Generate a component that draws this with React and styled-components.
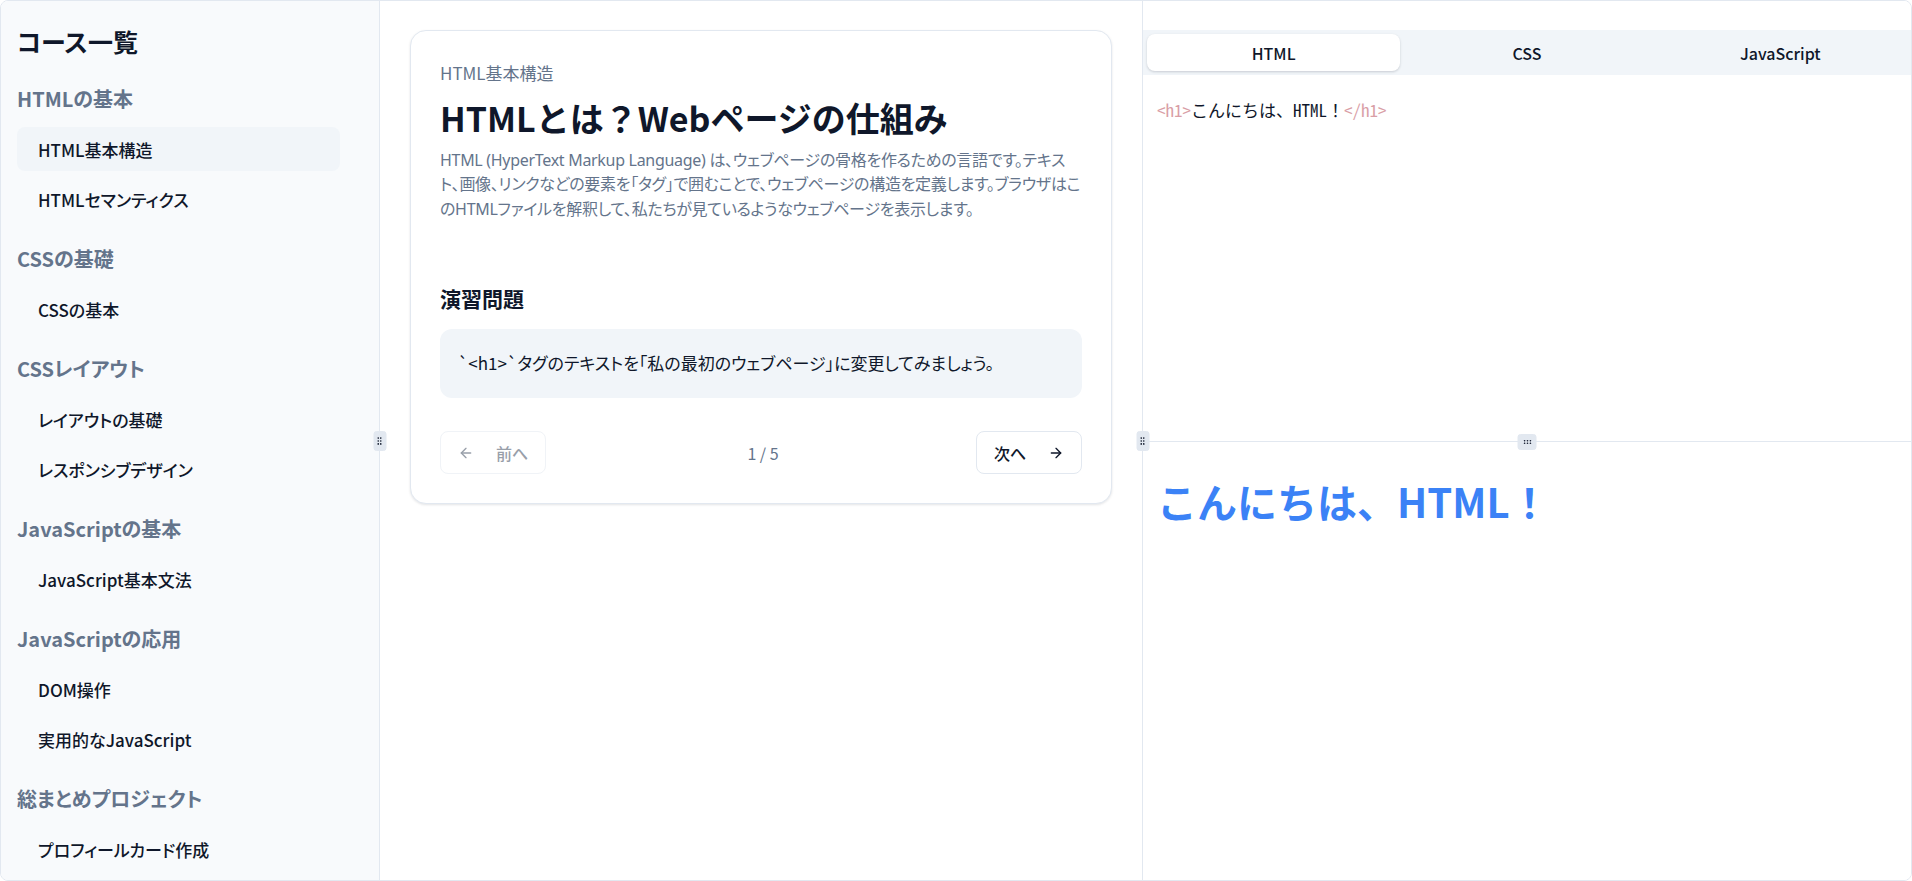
import React from "react";
import styled, { createGlobalStyle } from "styled-components";
import { ArrowLeft, ArrowRight } from "lucide-react";

const GlobalStyle = createGlobalStyle`
  html, body {
    margin: 0;
    padding: 0;
    height: 100%;
    background: #ffffff;
  }
  body {
    font-family: "Noto Sans CJK JP", "Noto Sans", sans-serif;
    color: #0f172a;
  }
  * {
    box-sizing: border-box;
  }
`;

const courses = [
  { title: "HTMLの基本", lessons: ["HTML基本構造", "HTMLセマンティクス"] },
  { title: "CSSの基礎", lessons: ["CSSの基本"] },
  { title: "CSSレイアウト", lessons: ["レイアウトの基礎", "レスポンシブデザイン"] },
  { title: "JavaScriptの基本", lessons: ["JavaScript基本文法"] },
  { title: "JavaScriptの応用", lessons: ["DOM操作", "実用的なJavaScript"] },
  { title: "総まとめプロジェクト", lessons: ["プロフィールカード作成"] },
];

const GripDots = ({ horizontal }) => (
  <svg
    width={horizontal ? 12 : 10}
    height={horizontal ? 10 : 12}
    viewBox="0 0 24 24"
    fill="#0f172a"
  >
    {horizontal ? (
      <>
        <circle cx="5" cy="9" r="2" />
        <circle cx="12" cy="9" r="2" />
        <circle cx="19" cy="9" r="2" />
        <circle cx="5" cy="15" r="2" />
        <circle cx="12" cy="15" r="2" />
        <circle cx="19" cy="15" r="2" />
      </>
    ) : (
      <>
        <circle cx="9" cy="5" r="2" />
        <circle cx="9" cy="12" r="2" />
        <circle cx="9" cy="19" r="2" />
        <circle cx="15" cy="5" r="2" />
        <circle cx="15" cy="12" r="2" />
        <circle cx="15" cy="19" r="2" />
      </>
    )}
  </svg>
);

const App = () => {
  return (
    <>
      <GlobalStyle />
      <Layout>
        <Sidebar>
          <SidebarTitle>コース一覧</SidebarTitle>
          <GroupList>
            {courses.map((course) => (
              <Group key={course.title}>
                <GroupTitle>{course.title}</GroupTitle>
                <LessonList>
                  {course.lessons.map((lesson) => (
                    <Lesson key={lesson} $active={lesson === "HTML基本構造"}>
                      {lesson}
                    </Lesson>
                  ))}
                </LessonList>
              </Group>
            ))}
          </GroupList>
        </Sidebar>

        <VDivider>
          <VGrip>
            <GripDots />
          </VGrip>
        </VDivider>

        <Main>
          <Card>
            <Breadcrumb>HTML基本構造</Breadcrumb>
            <LessonTitle>HTMLとは？Webページの仕組み</LessonTitle>
            <Description>
              HTML (HyperText Markup Language)
              は、ウェブページの骨格を作るための言語です。テキスト、画像、リンクなどの要素を「タグ」で囲むことで、ウェブページの構造を定義します。ブラウザはこのHTMLファイルを解釈して、私たちが見ているようなウェブページを表示します。
            </Description>
            <ExerciseTitle>演習問題</ExerciseTitle>
            <ExerciseBox>`&lt;h1&gt;`タグのテキストを「私の最初のウェブページ」に変更してみましょう。</ExerciseBox>
            <Pager>
              <PagerButton disabled>
                <ArrowLeft size={16} strokeWidth={2} />
                <span>前へ</span>
              </PagerButton>
              <PageCount>1 / 5</PageCount>
              <PagerButton>
                <span>次へ</span>
                <ArrowRight size={16} strokeWidth={2} />
              </PagerButton>
            </Pager>
          </Card>
        </Main>

        <VDivider>
          <VGrip>
            <GripDots />
          </VGrip>
        </VDivider>

        <Workspace>
          <EditorPane>
            <TabBar>
              <Tab $active>HTML</Tab>
              <Tab>CSS</Tab>
              <Tab>JavaScript</Tab>
            </TabBar>
            <Code>
              <TagToken>&lt;h1&gt;</TagToken>
              こんにちは、HTML！
              <TagToken>&lt;/h1&gt;</TagToken>
            </Code>
          </EditorPane>
          <HDivider>
            <HGrip>
              <GripDots horizontal />
            </HGrip>
          </HDivider>
          <PreviewPane>
            <PreviewHeading>こんにちは、HTML！</PreviewHeading>
          </PreviewPane>
        </Workspace>
      </Layout>
    </>
  );
};

export default App;

const Layout = styled.div`
  display: flex;
  height: 100vh;
  border: 1px solid #e2e8f0;
  border-radius: 8px;
  overflow: hidden;
  background: #ffffff;
`;

const Sidebar = styled.aside`
  flex: 0 0 378px;
  background: #f8fafc;
  padding: 24px 39px 24px 16px;
  overflow: hidden;
  font-feature-settings: "palt";
`;

const SidebarTitle = styled.h2`
  margin: 0 0 28px;
  font-size: 25px;
  line-height: 32px;
  font-weight: 700;
  color: #0f172a;
`;

const GroupList = styled.div`
  display: flex;
  flex-direction: column;
  gap: 24px;
`;

const Group = styled.section`
  display: flex;
  flex-direction: column;
  gap: 14px;
`;

const GroupTitle = styled.h3`
  margin: 0;
  font-size: 20px;
  line-height: 28px;
  font-weight: 600;
  color: #64748b;
`;

const LessonList = styled.div`
  display: flex;
  flex-direction: column;
  gap: 6px;
`;

const Lesson = styled.div`
  display: flex;
  align-items: center;
  height: 44px;
  padding: 0 21px;
  border-radius: 8px;
  font-size: 17px;
  font-weight: 500;
  color: #0f172a;
  background: ${(p) => (p.$active ? "#f1f5f9" : "transparent")};
  cursor: pointer;
`;

const VDivider = styled.div`
  position: relative;
  flex: 0 0 1px;
  background: #e2e8f0;
`;

const VGrip = styled.div`
  position: absolute;
  top: 50%;
  left: 50%;
  transform: translate(-50%, -50%);
  z-index: 2;
  display: flex;
  align-items: center;
  justify-content: center;
  width: 13px;
  height: 20px;
  border-radius: 3px;
  border: 1px solid #e2e8f0;
  background: #e2e8f0;
`;

const Main = styled.main`
  flex: 0 0 762px;
  padding: 29px 30px 30px 30px;
  background: #ffffff;
`;

const Card = styled.article`
  display: flex;
  flex-direction: column;
  border: 1px solid #e2e8f0;
  border-radius: 16px;
  background: #ffffff;
  box-shadow: 0 1px 3px rgba(15, 23, 42, 0.08), 0 1px 2px rgba(15, 23, 42, 0.04);
  padding: 30px 29px 29px;
`;

const Breadcrumb = styled.div`
  font-size: 17px;
  line-height: 24px;
  color: #64748b;
  font-feature-settings: "palt";
`;

const LessonTitle = styled.h1`
  margin: 12px 0 0;
  font-size: 34px;
  line-height: 42px;
  font-weight: 700;
  color: #0f172a;
`;

const Description = styled.p`
  margin: 9px 0 0;
  font-family: "Noto Sans", "Noto Sans CJK JP", sans-serif;
  font-size: 16px;
  line-height: 24.4px;
  letter-spacing: -0.3px;
  color: #64748b;
  font-feature-settings: "palt";
`;

const ExerciseTitle = styled.h2`
  margin: 63px 0 0;
  font-size: 21px;
  line-height: 28px;
  font-weight: 700;
  color: #0f172a;
`;

const ExerciseBox = styled.div`
  margin-top: 17px;
  padding: 22px 18px 23px;
  border-radius: 12px;
  background: #f1f5f9;
  font-size: 17px;
  line-height: 24px;
  color: #0f172a;
  font-feature-settings: "palt";
`;

const Pager = styled.div`
  margin-top: 33px;
  display: flex;
  align-items: center;
  justify-content: space-between;
`;

const PagerButton = styled.button`
  display: flex;
  align-items: center;
  gap: 22px;
  height: 43px;
  padding: 0 17px;
  border: 1px solid #e2e8f0;
  border-radius: 8px;
  background: #ffffff;
  font-family: inherit;
  font-size: 16px;
  font-weight: 500;
  color: #0f172a;
  cursor: pointer;

  &:disabled {
    opacity: 0.5;
    cursor: default;
    color: #334155;
  }
`;

const PageCount = styled.span`
  font-size: 16px;
  color: #64748b;
  margin-left: 4px;
`;

const Workspace = styled.section`
  flex: 1;
  display: flex;
  flex-direction: column;
  background: #ffffff;
`;

const EditorPane = styled.div`
  flex: 0 0 440px;
  padding-top: 29px;
  display: flex;
  flex-direction: column;
`;

const TabBar = styled.div`
  display: flex;
  padding: 4px;
  height: 45px;
  background: #f1f5f9;
`;

const Tab = styled.button`
  flex: 1;
  border: 0;
  border-radius: 8px;
  font-family: inherit;
  font-size: 16px;
  font-weight: 500;
  color: #0f172a;
  cursor: pointer;
  background: ${(p) => (p.$active ? "#ffffff" : "transparent")};
  box-shadow: ${(p) =>
    p.$active ? "0 1px 3px rgba(15, 23, 42, 0.12), 0 1px 2px rgba(15, 23, 42, 0.06)" : "none"};
`;

const Code = styled.pre`
  margin: 0;
  padding: 23px 14px;
  font-family: "Noto Sans Mono CJK JP", "Liberation Mono", "Noto Sans CJK JP", monospace;
  font-size: 17px;
  line-height: 24px;
  color: #0f172a;
`;

const TagToken = styled.span`
  color: #d99ea6;
`;

const HDivider = styled.div`
  position: relative;
  flex: 0 0 1px;
  background: #e2e8f0;
`;

const HGrip = styled.div`
  position: absolute;
  top: 50%;
  left: 50%;
  transform: translate(-50%, -50%);
  z-index: 2;
  display: flex;
  align-items: center;
  justify-content: center;
  width: 19px;
  height: 16px;
  border-radius: 3px;
  border: 1px solid #e2e8f0;
  background: #e2e8f0;
`;

const PreviewPane = styled.div`
  flex: 1;
  padding: 35px 14px 14px;
`;

const PreviewHeading = styled.h1`
  margin: 0;
  font-size: 40px;
  line-height: 48px;
  font-weight: 700;
  color: #3b82f6;
`;
